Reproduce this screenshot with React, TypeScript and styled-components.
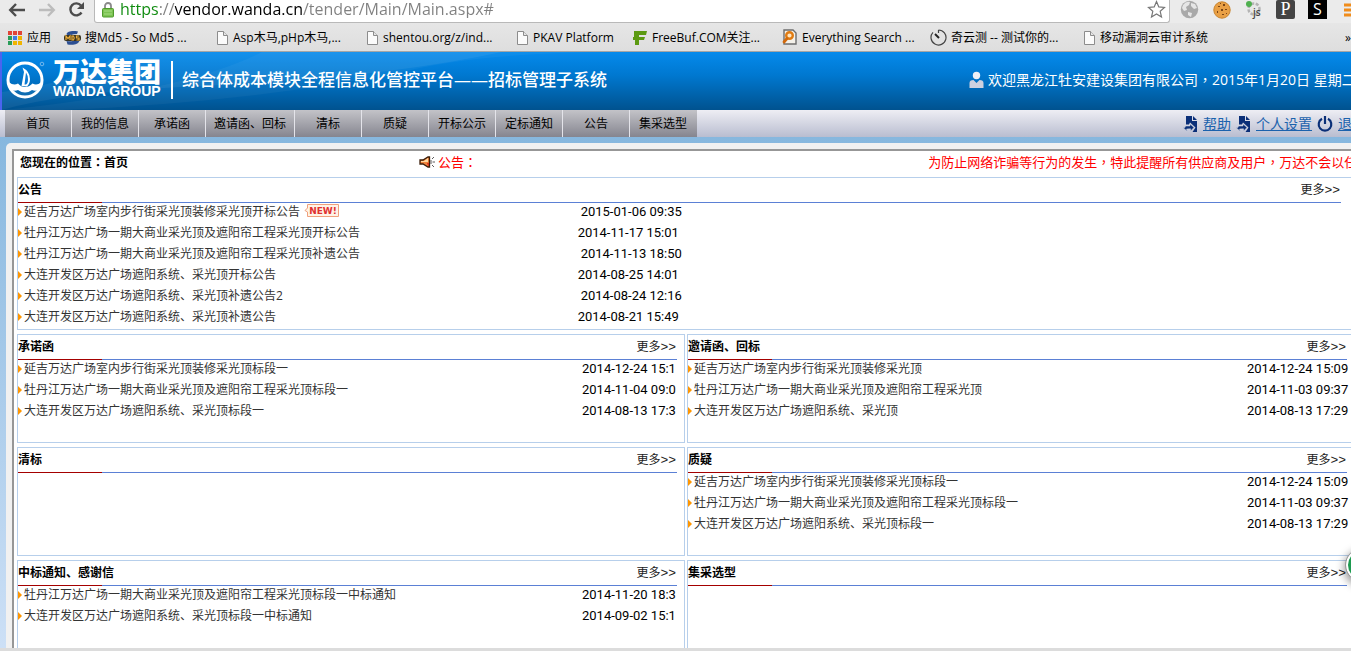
import React from 'react';
import styled, { createGlobalStyle, css } from 'styled-components';

const uiFont = '"Open Sans", "Noto Sans CJK SC", sans-serif';
const dateFont = 'Roboto, "Noto Sans CJK SC", sans-serif';

const GlobalStyle = createGlobalStyle`
  *, *::before, *::after { box-sizing: border-box; }
  body { margin: 0; font-family: ${uiFont}; font-size: 12px; color: #000; background: #fff; }
  button, input { font: inherit; color: inherit; border: 0; background: none; padding: 0; margin: 0; }
  h1, h2, p { margin: 0; font-size: inherit; }
  a { color: inherit; text-decoration: none; }
`;

const Window = styled.div`
  height: 100vh;
  display: flex;
  flex-direction: column;
  overflow: hidden;
  position: relative;
`;

/* ---------- browser chrome ---------- */

const Toolbar = styled.header`
  display: flex;
  align-items: flex-start;
  height: 23px;
  background: #ebebeb;
  padding-left: 8px;
`;

const ToolButton = styled.button<{ $w?: number }>`
  width: ${(p) => p.$w ?? 30}px;
  height: 19px;
  flex: none;
  display: flex;
  align-items: center;
`;

const AddressBar = styled.div`
  flex: 1;
  height: 23px;
  display: flex;
  align-items: flex-start;
  background: #fff;
  border: 1px solid #b9b9b9;
  border-top: 0;
  border-radius: 0 0 3px 3px;
  padding: 0 3px 0 7px;
`;

const Address = styled.input`
  flex: 1;
  height: 18px;
  margin-left: 6px;
  font-size: 16px;
  line-height: 18px;
  outline: 0;
  color: transparent;
  background: linear-gradient(90deg, #0c8a0c 0 39px, #808080 39px 55px, #000 55px 183px, #808080 183px);
  background-clip: text;
  -webkit-background-clip: text;
`;

const Extensions = styled.div`
  display: flex;
  padding-left: 10px;
  width: 181px;
  overflow: hidden;
`;

const BookmarkBar = styled.nav`
  display: flex;
  align-items: center;
  height: 29px;
  background: linear-gradient(#e6e6e6, #dedede);
  border-bottom: 1px solid #a5a5a5;
  padding: 1px 0 0 7px;
  flex: none;
`;

const Bookmark = styled.a<{ $w: number }>`
  width: ${(p) => p.$w}px;
  flex: none;
  display: flex;
  align-items: center;
  gap: 4px;
  line-height: 18px;
  white-space: nowrap;
  svg { flex: none; }
`;

const MoreMarks = styled.button`
  margin-left: auto;
  font-size: 12px;
`;

/* ---------- site ---------- */

const Viewport = styled.div`
  flex: 1;
  min-height: 0;
  overflow: hidden;
  background: linear-gradient(#86b7de 80px, #cde0f6);
`;

const Site = styled.div`
  width: calc(100% + 20px);
`;

const Banner = styled.div`
  position: relative;
  display: flex;
  align-items: center;
  height: 58px;
  color: #fff;
  background: linear-gradient(#058aec, #0078d0 40%, #00528f);
  border-left: 2px solid #4a64ef;
  padding: 0 0 3px 4px;
`;

const Glow = styled.svg`
  position: absolute;
  left: 0;
  top: 0;
`;

const Brand = styled.div`
  position: relative;
  display: flex;
  align-items: center;
  padding-right: 9px;
  border-right: 2px solid #fff;
  height: 38px;
`;

const BrandText = styled.div`
  width: 109px;
  margin-left: 8px;
  white-space: nowrap;
`;

const BrandName = styled.div`
  font: 900 27px/22px "Noto Sans CJK SC", sans-serif;
`;

const BrandLatin = styled.div`
  font: bold 14px/18px "Liberation Sans", sans-serif;
`;

const SiteTitle = styled.h1`
  position: relative;
  margin-left: 9px;
  font-size: 17px;
  font-weight: 500;
  line-height: 24px;
  white-space: nowrap;
  flex: 1;
`;

const Welcome = styled.p`
  display: flex;
  align-items: center;
  gap: 4px;
  width: 402px;
  font-size: 14px;
  line-height: 20px;
  white-space: nowrap;
`;

const MenuBar = styled.div`
  display: flex;
  height: 27px;
  padding-left: 5px;
  background: linear-gradient(#eeeef4, #b9bdd0);
`;

const MenuItem = styled.button`
  min-width: 67px;
  padding: 0 8px;
  border-right: 1px solid #e4e4ea;
  background: linear-gradient(#c3c3c8, #85858f);
  line-height: 27px;
  white-space: nowrap;
  &:last-of-type { border-right-color: transparent; }
`;

const Tools = styled.div`
  display: flex;
  align-items: center;
  gap: 5px;
  margin-left: auto;
  width: 188px;
  font-size: 14px;
  line-height: 20px;
  color: #1b62ad;
  white-space: nowrap;
  a { text-decoration: underline; }
  svg { flex: none; }
`;

const Frame = styled.main`
  margin: 6px 0 0 6px;
  padding: 6px 0 0 6px;
  background: #f1f1f1;
  border-top-left-radius: 5px;
`;

const Sheet = styled.div`
  border: solid #979797;
  border-width: 2px 0 0 2px;
  background: #fff;
  padding: 0 16px 6px 3px;
`;

const Crumbs = styled.div`
  display: flex;
  align-items: center;
  height: 26px;
  padding-bottom: 4px;
  white-space: nowrap;
`;

const Place = styled.strong`
  width: 402px;
  padding-left: 3px;
  line-height: 18px;
  flex: none;
`;

const Notice = styled.div`
  display: flex;
  align-items: center;
  gap: 2px;
  flex: 1;
  min-width: 0;
  font-size: 13px;
  line-height: 20px;
  color: #f00;
`;

const Ticker = styled.p`
  flex: 1;
  overflow: hidden;
  padding-left: 48%;
`;

const Mark = styled.span`
  font-family: "Noto Sans CJK TC", sans-serif;
`;

const Panels = styled.div`
  display: grid;
  grid-template-columns: 1fr 1fr;
  gap: 4px 2px;
`;

const PanelBox = styled.section<{ $wide?: boolean }>`
  border: 1px solid #b7cfeb;
  min-height: 109px;
  padding-right: 7px;
  min-width: 0;
  ${(p) => p.$wide && css`
    grid-column: 1 / -1;
    min-height: 153px;
    padding-right: 13px;
  `}
`;

const PanelHead = styled.div`
  position: relative;
  display: flex;
  justify-content: space-between;
  height: 25px;
  line-height: 23px;
  border-bottom: 1px solid #5b80d5;
  &::after {
    content: '';
    position: absolute;
    left: 0;
    bottom: -1px;
    width: 84px;
    height: 1px;
    background: #a40000;
  }
`;

const More = styled.a`
  color: #222;
  padding-right: 1px;
  span { font-family: "Liberation Mono", monospace; font-size: 13px; }
`;

const List = styled.table`
  width: 100%;
  table-layout: fixed;
  border-collapse: collapse;
`;

const Cell = styled.td`
  height: 21px;
  padding: 0 0 3px;
  line-height: 18px;
  white-space: nowrap;
  color: #333;
`;

const DateCell = styled(Cell)<{ $width: string; $wide?: boolean }>`
  width: ${(p) => p.$width};
  font-family: ${dateFont};
  font-size: 13px;
  color: #000;
  ${(p) => p.$wide && css`
    tr:nth-child(odd) > & { padding-left: 3px; }
  `}
`;

const Item = styled.a`
  display: flex;
  align-items: center;
  gap: 2px;
  svg { flex: none; }
`;

const StatusEdge = styled.footer`
  height: 3px;
  flex: none;
  background: #dcdcdc;
`;

const Bubble = styled.button`
  position: absolute;
  right: -27px;
  top: 549px;
  width: 32px;
  height: 32px;
  border-radius: 50%;
  background: #1e9a50;
  border: 2px solid #fff;
  outline: 1px solid #999;
  box-shadow: 0 3px 8px 2px rgba(0, 0, 0, 0.4);
`;

/* ---------- drawings ---------- */

const PageIcon = () => (
  <svg width="14" height="16" viewBox="0 0 14 16">
    <path d="M2.5 1.5h6l4 4v9h-10z" fill="#fbfbfb" stroke="#8c8c8c" />
    <path d="M8.5 1.5v4h4" fill="#e6e6e6" stroke="#8c8c8c" />
  </svg>
);

const AppsIcon = () => (
  <svg width="16" height="16" viewBox="0 0 16 16">
    {['#e04436', '#e04436', '#e04436', '#2a9d58', '#3f7de0', '#f0b400', '#2a9d58', '#f0b400', '#f0b400'].map((c, i) => (
      <rect key={i} x={1 + (i % 3) * 5} y={1 + Math.floor(i / 3) * 5} width="4" height="4" fill={c} />
    ))}
  </svg>
);

const Md5Icon = () => (
  <svg width="17" height="16" viewBox="0 0 17 16">
    <path d="M14 1.500C9 .5 3 1 2.500 4.500l10 4c0 3-6 3-10 2.500l1 3.500c6 1 11 0 12-4V6L7 4.500l6-.5z" fill="#2c4f92" />
    <rect x="0" y="5" width="17" height="6" rx="2" fill="#3a3420" />
    <path d="M2 10V6l2 2.500L6 6v4M8 6v4h1.500q1.500-2 0-4zM15 6h-2.500v2H15v2h-2.500" fill="none" stroke="#f0b13c" strokeWidth="1.200" />
  </svg>
);

const FIcon = () => (
  <svg width="16" height="16" viewBox="0 0 16 16">
    <path d="M2 1h13l-1 4H7v2h6l-1 3H7v5H3V10H1V7h1z" fill="#5c9a12" />
  </svg>
);

const SearchPageIcon = () => (
  <svg width="17" height="17" viewBox="0 0 17 17">
    <path d="M3 1h9l3 3v11H3z" fill="#f4f1ea" stroke="#6d6d6d" strokeWidth="1.400" />
    <circle cx="8.500" cy="6.500" r="3.300" fill="#ffe6c0" stroke="#e07b12" strokeWidth="2.400" />
    <path d="M6 9.500L3 13" stroke="#d2690b" strokeWidth="2.800" strokeLinecap="round" />
  </svg>
);

const GaugeIcon = () => (
  <svg width="17" height="17" viewBox="0 0 17 17" fill="none" stroke="#444">
    <path d="M8.500 1v3M8.500 1a7.500 7.500 0 1 1-5.500 2.400" strokeWidth="1.200" />
    <path d="M5 5l4 4" strokeWidth="2" stroke="#222" />
  </svg>
);

const BackIcon = () => (
  <svg width="18" height="16" viewBox="0 0 18 16" fill="none" stroke="#4c4c4c" strokeWidth="2.400">
    <path d="M2 8h15M8 2L2.200 8 8 14" />
  </svg>
);

const ForwardIcon = () => (
  <svg width="18" height="16" viewBox="0 0 18 16" fill="none" stroke="#bcbcbc" strokeWidth="2.400">
    <path d="M1 8h15M10 2l5.800 6L10 14" />
  </svg>
);

const ReloadIcon = () => (
  <svg width="17" height="17" viewBox="0 0 17 17">
    <path d="M13.500 11.500A6 6 0 1 1 13 4.500" fill="none" stroke="#4c4c4c" strokeWidth="2.400" />
    <path d="M16 1v7H9z" fill="#4c4c4c" />
  </svg>
);

const LockIcon = () => (
  <svg width="12" height="17" viewBox="0 0 12 17">
    <path d="M3 8V5a3 3 0 0 1 6 0v3" fill="none" stroke="#8a8a8a" strokeWidth="1.800" />
    <rect x=".5" y="7.500" width="11" height="8.500" rx="1" fill="#7cc352" stroke="#4e9a2c" />
    <path d="M2 10h8M2 13h8" stroke="#a5dc85" />
  </svg>
);

const StarIcon = () => (
  <svg width="19" height="19" viewBox="0 0 19 19">
    <path d="M9.500 1.500l2.300 5.400 5.700.5-4.300 3.900 1.300 5.700-5-3-5 3 1.300-5.700L1.500 7.400l5.700-.5z" fill="#fff" stroke="#777" strokeWidth="1.200" />
  </svg>
);

const GlobeIcon = () => (
  <svg width="19" height="19" viewBox="0 0 19 19">
    <circle cx="9.500" cy="9.500" r="8.700" fill="#a9a9a9" />
    <path d="M3 5q3-4 7-3l-1 3-3 2 1 3-3 1-2-3zM11 3l4 1 2 4-3 1-3-3zM8 12l4 1-1 4-3-2z" fill="#e6e6e6" />
  </svg>
);

const CookieIcon = () => (
  <svg width="18" height="18" viewBox="0 0 18 18">
    <circle cx="9" cy="9" r="8.200" fill="#e9a045" stroke="#c98530" />
    <path d="M5 5h2v1H5zM10 3h2v2h-2zM12 8h2v1h-2zM8 8h2v2H8zM4 10h1v2H4zM9 13h2v1H9zM13 12h1v1h-1zM7 2h1v1H7z" fill="#7a4516" />
  </svg>
);

const JsIcon = () => (
  <svg width="19" height="19" viewBox="0 0 19 19">
    <circle cx="9" cy="9" r="5.500" fill="#e9e9e9" stroke="#b4b4b4" strokeWidth="2.500" strokeDasharray="3 1.500" />
    <circle cx="4" cy="4" r="3" fill="#4fb04f" />
    <text x="8" y="16" fontSize="10" fontFamily="Open Sans" fontWeight="600" fill="#444">js</text>
  </svg>
);

const LetterIcon = ({ letter, fill }: { letter: string; fill: string }) => (
  <svg width="19" height="19" viewBox="0 0 19 19">
    <rect width="19" height="19" rx={letter === 'P' ? 2 : 0} fill={fill} />
    <text x="9.500" y="15" textAnchor="middle" fontSize={letter === 'P' ? 18 : 16} fontFamily={letter === 'P' ? 'Liberation Serif' : 'Open Sans'} fill="#fff">{letter}</text>
  </svg>
);

const MenuIcon = () => (
  <svg width="18" height="16" viewBox="0 0 18 16">
    <path d="M0 3h18M0 8h18M0 13h18" stroke="#f08c1a" strokeWidth="3" />
  </svg>
);

const WandaMark = () => (
  <svg width="39" height="38" viewBox="0 0 39 38">
    <circle cx="19" cy="19" r="17" fill="none" stroke="#fff" strokeWidth="3" />
    <path d="M2 20.500q5 4.500 10 2 3 3.500 7 3.500t7.500-3.500q5 2.500 9.500-2l-2 7.500q-4 3-8 1-3.500 2.500-7 2.500T12 29q-4 2-8-1z" fill="#fff" />
    <path d="M15.500 25L18 11l-1.500-4.500q7.500 4 7.500 11.500 0 5-3 7.500z" fill="#fff" />
    <path d="M18.500 23.500L20 11.500q2 3 2 7t-2 5z" fill="#0a7bd4" />
    <circle cx="36" cy="3" r="1.800" fill="none" stroke="#8fc4f0" strokeWidth=".8" />
  </svg>
);

const UserIcon = () => (
  <svg width="15" height="18" viewBox="0 0 15 18">
    <circle cx="7.500" cy="4.500" r="3.700" fill="#eef0f6" />
    <path d="M.5 17V12q0-3 4-3l3 3 3-3q4 0 4 3v5z" fill="#cdd1e0" />
  </svg>
);

const DocIcon = () => (
  <svg width="15" height="16" viewBox="0 0 15 16">
    <path d="M3 0h6v5h5v11H9.500l3-4.500L7 6.500 6 8.500H3z" fill="#0a2f78" />
    <path d="M10 0l4 4h-4z" fill="#0a2f78" />
    <path d="M7 8l4 3.500L7.500 15v-2.200L3.500 13l1 2.500L0 11.500h2l.500-1.500H7z" fill="#0a2f78" stroke="#d5d8e4" strokeWidth=".5" />
  </svg>
);

const PowerIcon = () => (
  <svg width="16" height="16" viewBox="0 0 16 16" fill="none" stroke="#0a2f78" strokeWidth="2.200">
    <path d="M5 2.800a6.300 6.300 0 1 0 6 0M8 0v8" />
  </svg>
);

const HornIcon = () => (
  <svg width="17" height="12" viewBox="0 0 17 12">
    <path d="M1 4h3l5-3h1.500v10H9L4 8H1z" fill="#f0843c" stroke="#3a1c08" strokeWidth="1.300" />
    <path d="M2 5h3l4-3v4H2z" fill="#ffd9a0" />
    <path d="M8 7h2v3H9z" fill="#d8301c" />
    <path d="M12 4v4M13 3l2-2M13.500 6H16M13 9l2 2" stroke="#333" strokeWidth=".8" />
  </svg>
);

const Arrow = () => (
  <svg width="4" height="8" viewBox="0 0 4 8"><path d="M0 0l4 4-4 4z" fill="#ff9600" /></svg>
);

const NewTag = () => (
  <svg width="38" height="16" viewBox="0 0 38 16">
    <path d="M5.500.5h31v12h-31V8L3 6.500 5.500 4z" fill="#fff3e6" stroke="#f0a07c" />
    <text x="21" y="10" textAnchor="middle" fontSize="9" fontWeight="700" fontFamily="DejaVu Sans" fill="#e03030">NEW!</text>
  </svg>
);

/* ---------- data ---------- */

type Row = [title: string, date: string, fresh?: boolean];
interface PanelData { title: string; rows: Row[]; dateWidth: string; wide?: boolean }

const panels: PanelData[] = [
  {
    title: '公告', wide: true, dateWidth: '57.7%',
    rows: [
      ['延吉万达广场室内步行街采光顶装修采光顶开标公告', '2015-01-06 09:35', true],
      ['牡丹江万达广场一期大商业采光顶及遮阳帘工程采光顶开标公告', '2014-11-17 15:01'],
      ['牡丹江万达广场一期大商业采光顶及遮阳帘工程采光顶补遗公告', '2014-11-13 18:50'],
      ['大连开发区万达广场遮阳系统、采光顶开标公告', '2014-08-25 14:01'],
      ['大连开发区万达广场遮阳系统、采光顶补遗公告2', '2014-08-24 12:16'],
      ['大连开发区万达广场遮阳系统、采光顶补遗公告', '2014-08-21 15:49'],
    ],
  },
  {
    title: '承诺函', dateWidth: '95px',
    rows: [
      ['延吉万达广场室内步行街采光顶装修采光顶标段一', '2014-12-24 15:1'],
      ['牡丹江万达广场一期大商业采光顶及遮阳帘工程采光顶标段一', '2014-11-04 09:0'],
      ['大连开发区万达广场遮阳系统、采光顶标段一', '2014-08-13 17:3'],
    ],
  },
  {
    title: '邀请函、回标', dateWidth: '100px',
    rows: [
      ['延吉万达广场室内步行街采光顶装修采光顶', '2014-12-24 15:09'],
      ['牡丹江万达广场一期大商业采光顶及遮阳帘工程采光顶', '2014-11-03 09:37'],
      ['大连开发区万达广场遮阳系统、采光顶', '2014-08-13 17:29'],
    ],
  },
  { title: '清标', dateWidth: '95px', rows: [] },
  {
    title: '质疑', dateWidth: '100px',
    rows: [
      ['延吉万达广场室内步行街采光顶装修采光顶标段一', '2014-12-24 15:09'],
      ['牡丹江万达广场一期大商业采光顶及遮阳帘工程采光顶标段一', '2014-11-03 09:37'],
      ['大连开发区万达广场遮阳系统、采光顶标段一', '2014-08-13 17:29'],
    ],
  },
  {
    title: '中标通知、感谢信', dateWidth: '95px',
    rows: [
      ['牡丹江万达广场一期大商业采光顶及遮阳帘工程采光顶标段一中标通知', '2014-11-20 18:3'],
      ['大连开发区万达广场遮阳系统、采光顶标段一中标通知', '2014-09-02 15:1'],
    ],
  },
  { title: '集采选型', dateWidth: '100px', rows: [] },
];

const menu = ['首页', '我的信息', '承诺函', '邀请函、回标', '清标', '质疑', '开标公示', '定标通知', '公告', '集采选型'];

const bookmarks: [string, number, React.ReactNode][] = [
  ['应用', 57, <AppsIcon />],
  ['搜Md5 - So Md5 ...', 151, <Md5Icon />],
  ['Asp木马,pHp木马,...', 150, <PageIcon />],
  ['shentou.org/z/ind...', 150, <PageIcon />],
  ['PKAV Platform', 117, <PageIcon />],
  ['FreeBuf.COM关注...', 149, <FIcon />],
  ['Everything Search ...', 149, <SearchPageIcon />],
  ['奇云测 -- 测试你的...', 152, <GaugeIcon />],
  ['移动漏洞云审计系统', 140, <PageIcon />],
];

const Panel = ({ title, rows, dateWidth, wide }: PanelData) => (
  <PanelBox $wide={wide}>
    <PanelHead>
      <h2>{title}</h2>
      <More href="#">更多<span>&gt;&gt;</span></More>
    </PanelHead>
    <List>
      <tbody>
        {rows.map(([text, date, fresh]) => (
          <tr key={text}>
            <Cell><Item href="#"><Arrow />{text}{fresh && <NewTag />}</Item></Cell>
            <DateCell $width={dateWidth} $wide={wide}>{date}</DateCell>
          </tr>
        ))}
      </tbody>
    </List>
  </PanelBox>
);

export default function App() {
  return (
    <Window>
      <GlobalStyle />
      <Toolbar>
        <ToolButton aria-label="后退"><BackIcon /></ToolButton>
        <ToolButton aria-label="前进"><ForwardIcon /></ToolButton>
        <ToolButton aria-label="刷新" $w={26}><ReloadIcon /></ToolButton>
        <AddressBar>
          <ToolButton as="span" $w={12}><LockIcon /></ToolButton>
          <Address aria-label="地址" defaultValue="https://vendor.wanda.cn/tender/Main/Main.aspx#" />
          <ToolButton aria-label="收藏" $w={19}><StarIcon /></ToolButton>
        </AddressBar>
        <Extensions>
          <ToolButton aria-label="代理" $w={33}><GlobeIcon /></ToolButton>
          <ToolButton aria-label="Cookie" $w={32}><CookieIcon /></ToolButton>
          <ToolButton aria-label="脚本" $w={31}><JsIcon /></ToolButton>
          <ToolButton aria-label="P" $w={32}><LetterIcon letter="P" fill="#444" /></ToolButton>
          <ToolButton aria-label="S" $w={36}><LetterIcon letter="S" fill="#000" /></ToolButton>
          <ToolButton aria-label="菜单" $w={18}><MenuIcon /></ToolButton>
        </Extensions>
      </Toolbar>
      <BookmarkBar>
        {bookmarks.map(([label, w, icon]) => (
          <Bookmark key={label} href="#" $w={w}>{icon}{label}</Bookmark>
        ))}
        <MoreMarks>»</MoreMarks>
      </BookmarkBar>
      <Viewport>
        <Site>
          <Banner>
            <Glow width="620" height="58" viewBox="0 0 620 58">
              <path d="M0 58Q180 40 260 0H620Q480 0 400 20 250 50 60 58z" fill="#fff" opacity=".04" />
              <path d="M120 0H500Q380 26 200 34 60 40 0 58V40Q80 30 120 0z" fill="#fff" opacity=".06" />
            </Glow>
            <Brand>
              <WandaMark />
              <BrandText>
                <BrandName>万达集团</BrandName>
                <BrandLatin>WANDA GROUP</BrandLatin>
              </BrandText>
            </Brand>
            <SiteTitle>综合体成本模块全程信息化管控平台——招标管理子系统</SiteTitle>
            <Welcome>
              <UserIcon />
              <span>欢迎黑龙江牡安建设集团有限公司<Mark>，</Mark>2015年1月20日 星期二</span>
            </Welcome>
          </Banner>
          <MenuBar>
            {menu.map((m) => <MenuItem key={m}>{m}</MenuItem>)}
            <Tools>
              <DocIcon /><a href="#">帮助</a>
              <DocIcon /><a href="#">个人设置</a>
              <PowerIcon /><a href="#">退出</a>
            </Tools>
          </MenuBar>
          <Frame>
            <Sheet>
              <Crumbs>
                <Place>您现在的位置<Mark>：</Mark>首页</Place>
                <Notice>
                  <HornIcon />
                  <span>公告<Mark>：</Mark></span>
                  <Ticker>为防止网络诈骗等行为的发生<Mark>，</Mark>特此提醒所有供应商及用户<Mark>，</Mark>万达不会以任何</Ticker>
                </Notice>
              </Crumbs>
              <Panels>
                {panels.map((p) => <Panel key={p.title} {...p} />)}
              </Panels>
            </Sheet>
          </Frame>
        </Site>
      </Viewport>
      <StatusEdge />
      <Bubble aria-label="助手" />
    </Window>
  );
}
